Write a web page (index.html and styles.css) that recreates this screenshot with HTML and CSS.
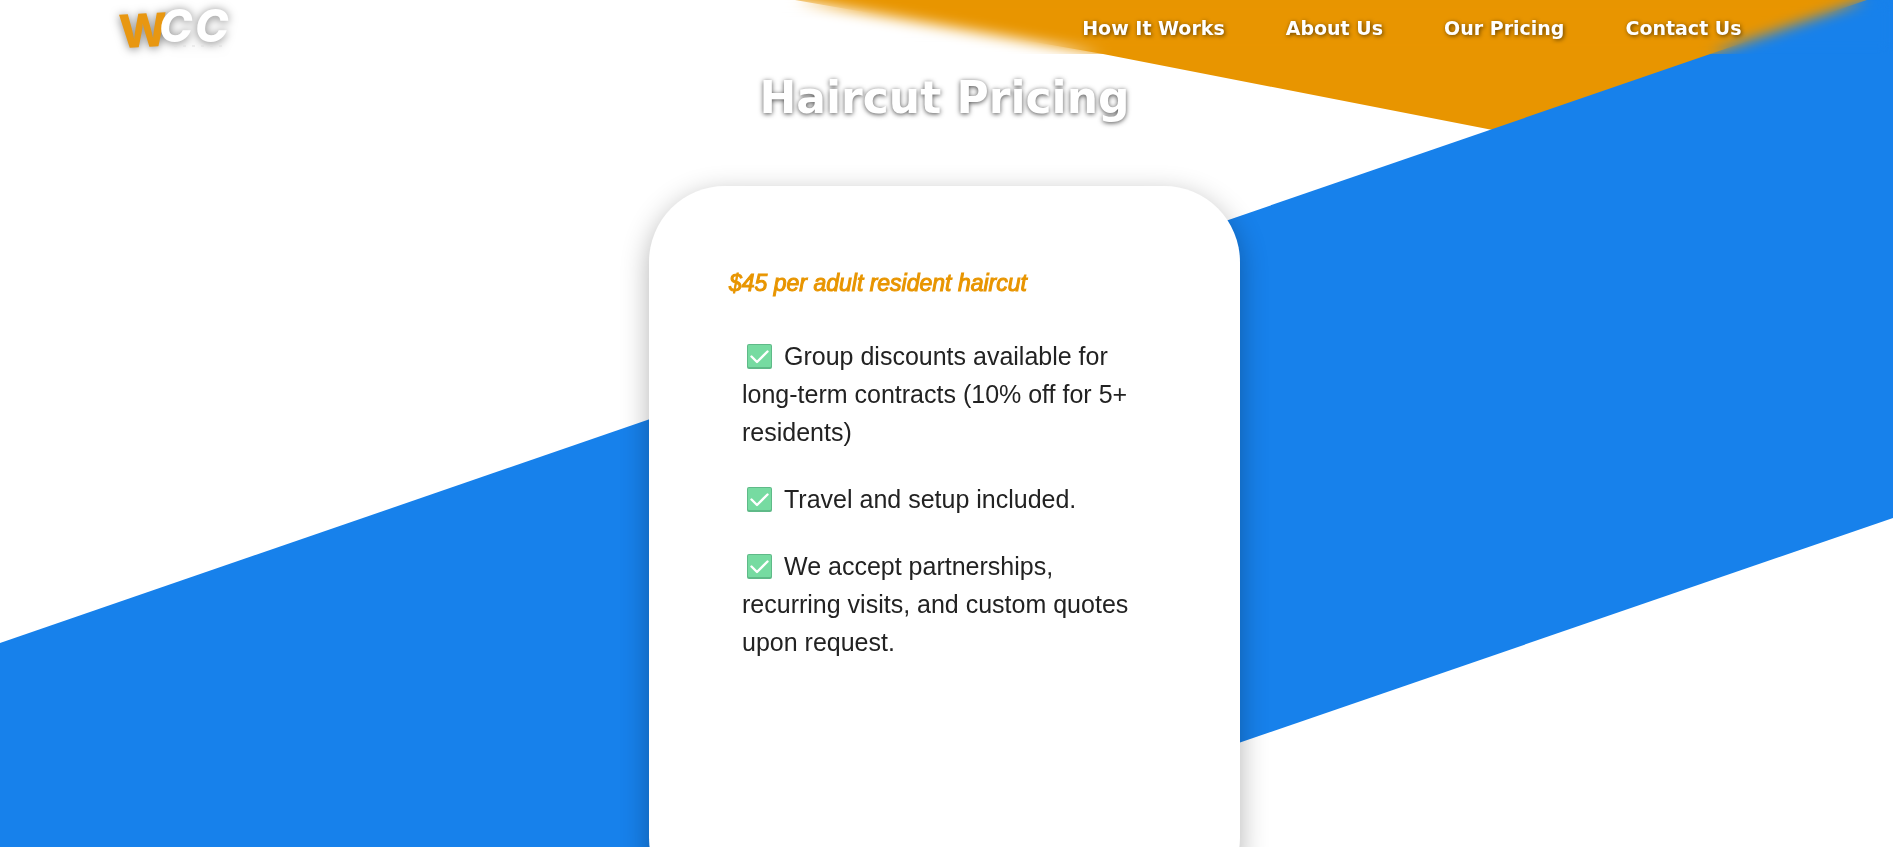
FILE: index.html
```html
<!DOCTYPE html>
<html lang="en">
<head>
<meta charset="utf-8">
<meta name="viewport" content="width=device-width, initial-scale=1">
<title>Haircut Pricing</title>
<link rel="stylesheet" href="styles.css">
</head>
<body>
<svg class="backdrop" viewBox="0 0 1893 847" preserveAspectRatio="none" aria-hidden="true">
  <polygon fill="#e89500" points="795,0 1893,0 1893,208 1103,54"/>
  <polygon fill="#1781eb" points="0,643 1893,-9 1893,518 936,847 0,847"/>
</svg>
<header class="site-header">
  <a class="logo" href="#" aria-label="WCC home">
    <svg class="logo-mark" viewBox="0 0 120 54" aria-hidden="true">
      <text class="logo-w" x="5" y="47" transform="rotate(-3 30 32)">W</text>
      <text class="logo-c" x="45 81" y="42">CC</text>
      <path class="logo-rule" d="M60 46H110"/>
    </svg>
  </a>
  <nav class="site-nav">
    <a href="#how">How It Works</a>
    <a href="#about">About Us</a>
    <a href="#pricing">Our Pricing</a>
    <a href="#contact">Contact Us</a>
  </nav>
</header>
<main class="page" id="pricing">
  <h1 class="title">Haircut Pricing</h1>
  <section class="card">
    <h2 class="price">$45 per adult resident haircut</h2>
    <ul class="features">
      <li><svg class="check" viewBox="0 0 25 25" aria-hidden="true"><rect width="25" height="25" rx="2" fill="#5fba88"/><rect x="1" y="1" width="23" height="22" rx="1" fill="#76dba1"/><path d="M4.500 12.500l5.500 5.500L20.500 7.500" fill="none" stroke="#fff" stroke-width="2.400" stroke-linecap="round" stroke-linejoin="round"/></svg>Group discounts available for long-term contracts (10% off for 5+ residents)</li>
      <li><svg class="check" viewBox="0 0 25 25" aria-hidden="true"><rect width="25" height="25" rx="2" fill="#5fba88"/><rect x="1" y="1" width="23" height="22" rx="1" fill="#76dba1"/><path d="M4.500 12.500l5.500 5.500L20.500 7.500" fill="none" stroke="#fff" stroke-width="2.400" stroke-linecap="round" stroke-linejoin="round"/></svg>Travel and setup included.</li>
      <li><svg class="check" viewBox="0 0 25 25" aria-hidden="true"><rect width="25" height="25" rx="2" fill="#5fba88"/><rect x="1" y="1" width="23" height="22" rx="1" fill="#76dba1"/><path d="M4.500 12.500l5.500 5.500L20.500 7.500" fill="none" stroke="#fff" stroke-width="2.400" stroke-linecap="round" stroke-linejoin="round"/></svg>We accept partnerships, recurring visits, and custom quotes upon request.</li>
    </ul>
  </section>
</main>
</body>
</html>
```
FILE: styles.css
```css
* { box-sizing: border-box; }

html { scrollbar-width: none; }

body {
  margin: 0;
  background: #fff;
  color: #222;
  font-family: "Liberation Sans", Arial, sans-serif;
}

.backdrop {
  position: fixed;
  inset: 0;
  z-index: -1;
  width: 100%;
  height: 100%;
}

.site-header {
  position: sticky;
  top: 0;
  z-index: 2;
  display: flex;
  align-items: center;
  justify-content: space-between;
  height: 54px;
  padding: 0 8% 0 6%;
  backdrop-filter: blur(7px);
}

.logo { display: block; height: 54px; }

.logo-mark {
  display: block;
  width: 120px;
  height: 54px;
  overflow: visible;
  filter: drop-shadow(0 1px 5px rgba(0, 0, 0, 0.5));
}

.logo-w, .logo-c {
  font-family: Inter, sans-serif;
  font-weight: 800;
}

.logo-w { font-size: 46px; fill: #e89711; }

.logo-c { font-size: 45px; font-style: italic; fill: #fff; }

.logo-rule { fill: none; stroke: #ddd; stroke-width: 1; stroke-dasharray: 3 6; }

.site-nav { display: flex; gap: 61px; }

.site-nav a {
  color: #fff;
  font: bold 19px/24px "DejaVu Sans", sans-serif;
  padding-top: 2px;
  text-decoration: none;
  text-shadow: 1px 1px 4px rgba(0, 0, 0, 0.6);
}

.page {
  display: flex;
  flex-direction: column;
  align-items: center;
}

.title {
  margin: 16px 4px 60px 0;
  color: #fff;
  font: bold 44px/56px "DejaVu Sans", sans-serif;
  text-shadow: 0 1px 5px rgba(0, 0, 0, 0.7);
}

.card {
  width: 591px;
  max-width: 100%;
  min-height: 728px;
  margin-right: 4px;
  padding: 80px;
  border-radius: 76px;
  background: #fff;
  box-shadow: 0 8px 28px rgba(0, 0, 0, 0.3);
}

.price {
  margin: 0 0 37px;
  color: #e89500;
  font-size: 23px;
  font-style: italic;
  font-weight: normal;
  line-height: 34px;
  -webkit-text-stroke: 1px #e89500;
}

.features {
  display: flex;
  flex-direction: column;
  gap: 29px;
  margin: 0;
  padding: 0 13px;
  list-style: none;
  font-size: 25px;
  line-height: 38px;
}

.check {
  width: 25px;
  height: 25px;
  margin: 0 12px 0 5px;
  vertical-align: -4px;
}
```
